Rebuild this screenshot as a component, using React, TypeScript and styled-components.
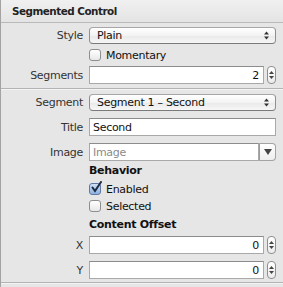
import React from "react";
import styled, { createGlobalStyle } from "styled-components";

const Global = createGlobalStyle`
  html, body { margin: 0; padding: 0; background: #e6e6e6; }
  body { font-family: "DejaVu Sans", "Liberation Sans", sans-serif; font-size: 11px; color: #1a1a1a; }
`;

const Panel = styled.div`
  width: 283px;
  height: 287px;
  box-sizing: border-box;
  border-left: 1px solid #a3a3a3;
  background: #e6e6e6;
  display: flex;
  flex-direction: column;
  overflow: hidden;
`;

const Header = styled.div`
  height: 23px;
  flex-shrink: 0;
  box-sizing: border-box;
  border-bottom: 1px solid #b9b9b9;
  background: linear-gradient(#f0f0f0, #e4e4e4);
  display: flex;
  align-items: center;
  padding-left: 11px;
  font-weight: bold;
  font-size: 10.4px;
  letter-spacing: -0.5px;
  color: #222;
`;

const Section = styled.div<{ $pt: number; $pb: number }>`
  display: flex;
  flex-direction: column;
  flex-shrink: 0;
  padding-top: ${(p) => p.$pt}px;
  padding-bottom: ${(p) => p.$pb}px;
  border-bottom: 1px solid #b3b3b3;
  box-shadow: 0 1px 0 #f4f4f4;
`;

const Row = styled.div<{ $h: number; $mt?: number }>`
  display: grid;
  grid-template-columns: 82px 1fr;
  column-gap: 6px;
  padding-right: 7px;
  height: ${(p) => p.$h}px;
  margin-top: ${(p) => p.$mt ?? 0}px;
  align-items: center;
`;

const Label = styled.div`
  text-align: right;
  color: #333;
  letter-spacing: -0.3px;
  white-space: nowrap;
`;

const Heading = styled.div`
  grid-column: 2;
  font-weight: bold;
  color: #111;
  letter-spacing: -0.3px;
`;

const Popup = styled.div`
  height: 17px;
  box-sizing: border-box;
  border: 1px solid #8f8f8f;
  border-top-color: #a6a6a6;
  border-bottom-color: #7a7a7a;
  border-radius: 4px;
  background: linear-gradient(#ffffff, #f3f3f3 50%, #e9e9e9 51%, #f7f7f7);
  display: flex;
  align-items: center;
  justify-content: space-between;
  padding: 0 6px 0 7px;
  letter-spacing: -0.3px;
  color: #111;
`;

const Field = styled.div<{ $right?: boolean; $placeholder?: boolean }>`
  flex: 1;
  height: 18px;
  box-sizing: border-box;
  border: 1px solid #a9a9a9;
  border-top-color: #8c8c8c;
  background: #fff;
  display: flex;
  align-items: center;
  justify-content: ${(p) => (p.$right ? "flex-end" : "flex-start")};
  padding: 0 4px 0 3px;
  color: ${(p) => (p.$placeholder ? "#8a8a8a" : "#111")};
  letter-spacing: -0.3px;
`;

const FieldGroup = styled.div`
  display: flex;
  align-items: center;
  gap: 3px;
`;

const Stepper = styled.div`
  width: 9px;
  height: 18px;
  box-sizing: border-box;
  border: 1px solid #8f8f8f;
  border-radius: 4px;
  background: linear-gradient(#ffffff, #ececec);
  display: flex;
  flex-direction: column;
  align-items: center;
  justify-content: center;
  gap: 2px;
`;

const Combo = styled.div`
  height: 18px;
  display: flex;
`;

const ComboButton = styled.div`
  width: 17px;
  height: 18px;
  box-sizing: border-box;
  border: 1px solid #a3a3a3;
  border-left: 1px solid #9a9a9a;
  border-radius: 0 4px 4px 0;
  background: linear-gradient(#ffffff, #eeeeee);
  display: flex;
  align-items: center;
  justify-content: center;
`;

const CheckRow = styled.label`
  display: flex;
  align-items: center;
  gap: 5px;
  letter-spacing: -0.3px;
  color: #111;
`;

const Box = styled.span<{ $checked?: boolean }>`
  width: 12px;
  height: 12px;
  box-sizing: border-box;
  border: 1px solid ${(p) => (p.$checked ? "#5f79a5" : "#8e8e8e")};
  border-radius: 3px;
  background: ${(p) =>
    p.$checked ? "linear-gradient(#cfe0f5, #8fb1e0)" : "linear-gradient(#ffffff, #e8e8e8)"};
  position: relative;
  display: inline-block;
`;

const UpDown = () => (
  <svg width="5" height="9" viewBox="0 0 5 9">
    <path d="M2.5 0.5 L5 3.5 L0 3.5 Z" fill="#333" />
    <path d="M2.5 8.5 L5 5.5 L0 5.5 Z" fill="#333" />
  </svg>
);

const SmallUp = () => (
  <svg width="5" height="3" viewBox="0 0 5 3">
    <path d="M2.5 0 L5 3 L0 3 Z" fill="#444" />
  </svg>
);
const SmallDown = () => (
  <svg width="5" height="3" viewBox="0 0 5 3">
    <path d="M2.5 3 L5 0 L0 0 Z" fill="#444" />
  </svg>
);

const DownTri = () => (
  <svg width="8" height="6" viewBox="0 0 8 6">
    <path d="M0 0 L8 0 L4 6 Z" fill="#444" />
  </svg>
);

const Check = () => (
  <svg width="13" height="13" viewBox="0 0 13 13" style={{ position: "absolute", left: 0, top: -3 }}>
    <path d="M2.5 6.5 L5 10 L11 1" stroke="#1d2a44" strokeWidth="2" fill="none" strokeLinecap="round" />
  </svg>
);

const NumberField = ({ value }: { value: string }) => (
  <FieldGroup>
    <Field $right>{value}</Field>
    <Stepper>
      <SmallUp />
      <SmallDown />
    </Stepper>
  </FieldGroup>
);

export default function App() {
  return (
    <>
      <Global />
      <Panel>
        <Header>Segmented Control</Header>
        <Section $pt={4} $pb={4}>
          <Row $h={17}>
            <Label>Style</Label>
            <Popup>
              <span>Plain</span>
              <UpDown />
            </Popup>
          </Row>
          <Row $h={14} $mt={4}>
            <span />
            <CheckRow>
              <Box />
              Momentary
            </CheckRow>
          </Row>
          <Row $h={18} $mt={4}>
            <Label>Segments</Label>
            <NumberField value="2" />
          </Row>
        </Section>
        <Section $pt={5} $pb={3}>
          <Row $h={17}>
            <Label>Segment</Label>
            <Popup>
              <span>Segment 1 – Second</span>
              <UpDown />
            </Popup>
          </Row>
          <Row $h={18} $mt={7}>
            <Label>Title</Label>
            <Field>Second</Field>
          </Row>
          <Row $h={18} $mt={7}>
            <Label>Image</Label>
            <Combo>
              <Field $placeholder>Image</Field>
              <ComboButton>
                <DownTri />
              </ComboButton>
            </Combo>
          </Row>
          <Row $h={14} $mt={2}>
            <span />
            <Heading>Behavior</Heading>
          </Row>
          <Row $h={14} $mt={5}>
            <span />
            <CheckRow>
              <Box $checked>
                <Check />
              </Box>
              Enabled
            </CheckRow>
          </Row>
          <Row $h={14} $mt={3}>
            <span />
            <CheckRow>
              <Box />
              Selected
            </CheckRow>
          </Row>
          <Row $h={14} $mt={4}>
            <span />
            <Heading>Content Offset</Heading>
          </Row>
          <Row $h={18} $mt={5}>
            <Label>X</Label>
            <NumberField value="0" />
          </Row>
          <Row $h={18} $mt={7}>
            <Label>Y</Label>
            <NumberField value="0" />
          </Row>
        </Section>
      </Panel>
    </>
  );
}
